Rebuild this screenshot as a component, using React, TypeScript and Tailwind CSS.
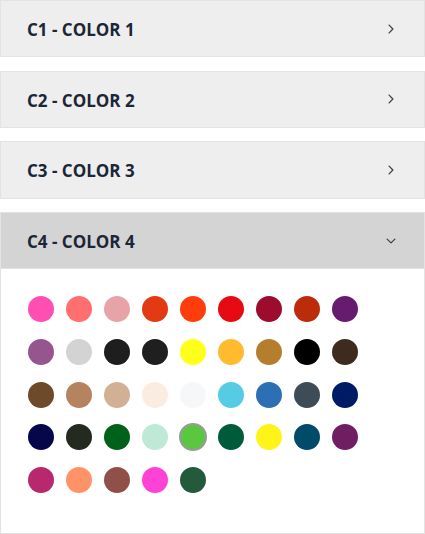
import React from "react";

const rows: string[][] = [
  ["#ff4fb2", "#ff6f6f", "#e6a4a9", "#e23b14", "#ff3c0c", "#e60a12", "#9d0c2c", "#bb2d0a", "#661b6f"],
  ["#95568f", "#d3d3d3", "#1e1e1e", "#1f1f1f", "#ffff1a", "#ffbb2e", "#b57e2c", "#000000", "#3e2a1e"],
  ["#6d4a2a", "#b5835f", "#d1b094", "#fbece2", "#f6f7f9", "#55cbe6", "#2c6fb5", "#3d4c57", "#001b66"],
  ["#06064a", "#242a1f", "#00621a", "#bde9d6", "#5ac83f", "#005b3b", "#fff41a", "#004b6a", "#6f1f61"],
  ["#b8286e", "#ff9266", "#8f5049", "#ff42d6", "#245a3c"],
];

function ChevronRight() {
  return (
    <svg width="18" height="18" viewBox="0 0 24 24" fill="none" stroke="#3f454e" strokeWidth="1.8" strokeLinecap="round" strokeLinejoin="round">
      <path d="m9.5 6.8 5 5.2-5 5.2" />
    </svg>
  );
}

function ChevronDown() {
  return (
    <svg width="18" height="18" viewBox="0 0 24 24" fill="none" stroke="#3f454e" strokeWidth="1.8" strokeLinecap="round" strokeLinejoin="round">
      <path d="m6.8 9.5 5.2 5 5.2-5" />
    </svg>
  );
}

function Header({ label, open }: { label: string; open?: boolean }) {
  return (
    <div
      className={`flex h-[57.33px] items-center justify-between border border-[#e3e3e3] pl-[26px] pr-[24px] ${
        open ? "bg-[#d4d4d4]" : "bg-[#eeeeee]"
      }`}
    >
      <span className="pt-[2px] text-[17px] font-bold text-[#1b2636]" style={{ fontFamily: '"Open Sans", sans-serif' }}>
        {label}
      </span>
      {open ? <ChevronDown /> : <ChevronRight />}
    </div>
  );
}

export default function App() {
  return (
    <div className="h-[534px] w-[425px] overflow-hidden bg-white">
      <div className="mb-[13.33px]">
        <Header label="C1 - COLOR 1" />
      </div>
      <div className="mb-[13.33px]">
        <Header label="C2 - COLOR 2" />
      </div>
      <div className="mb-[13.33px]">
        <Header label="C3 - COLOR 3" />
      </div>
      <div>
        <Header label="C4 - COLOR 4" open />
        <div className="h-[265px] border-x border-b border-[#e3e3e3] pl-[27px] pt-[27px]">
          <div className="flex flex-col gap-y-[16.7px]">
            {rows.map((row, i) => (
              <div key={i} className="flex gap-x-[12px]">
                {row.map((c, j) => {
                  const selected = i === 3 && j === 4;
                  return (
                    <div
                      key={j}
                      className={`h-[26px] w-[26px] rounded-full ${
                        selected ? "outline-2 -outline-offset-1 outline-[#9a9a9a]" : ""
                      }`}
                      style={{ backgroundColor: c, outlineStyle: selected ? "solid" : undefined }}
                    />
                  );
                })}
              </div>
            ))}
          </div>
        </div>
      </div>
    </div>
  );
}
